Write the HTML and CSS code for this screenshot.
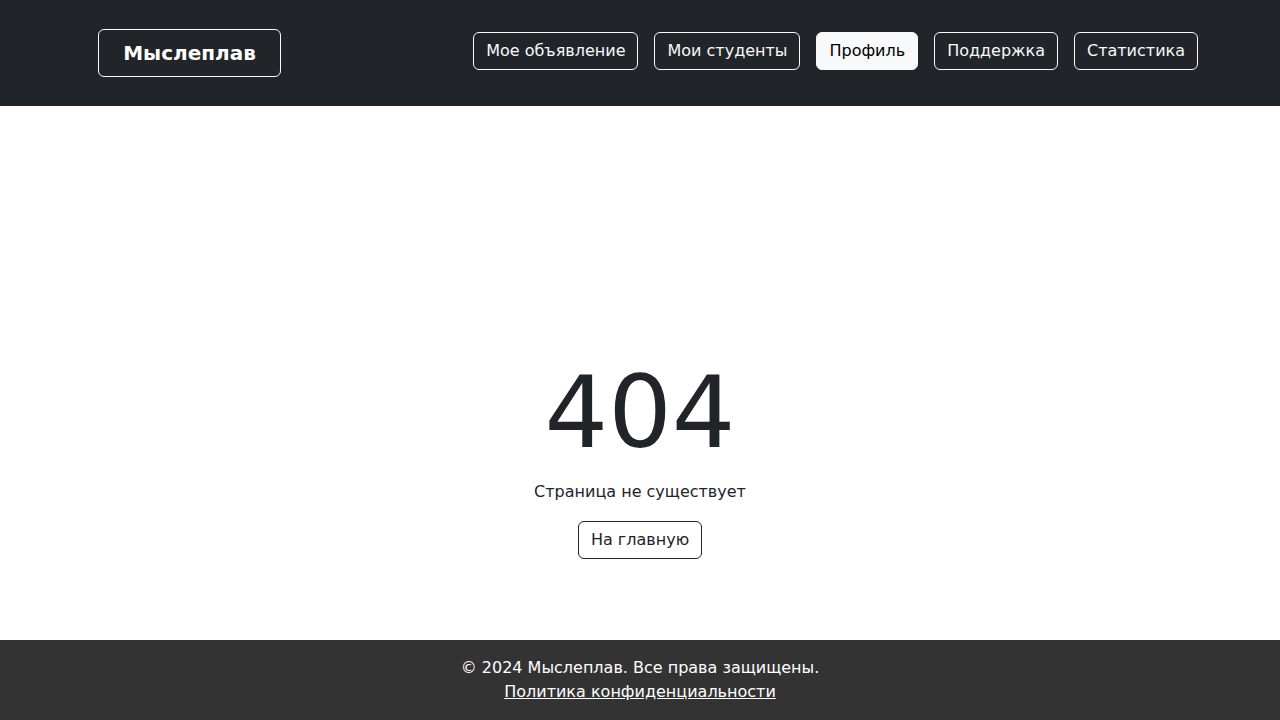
FILE: index.html
```html
<!DOCTYPE html>
<html lang="ru">
<head>
<meta charset="utf-8">
<title>404 — Мыслеплав</title>
<link rel="stylesheet" href="styles.css">
</head>
<body>
<header class="site-header">
  <div class="header-inner">
    <a class="brand" href="#">Мыслеплав</a>
    <nav class="nav">
      <a class="nav-btn" href="#">Мое объявление</a>
      <a class="nav-btn" href="#">Мои студенты</a>
      <a class="nav-btn active" href="#">Профиль</a>
      <a class="nav-btn" href="#">Поддержка</a>
      <a class="nav-btn" href="#">Статистика</a>
    </nav>
  </div>
</header>
<main class="main">
  <div class="error-box">
    <h1 class="error-code">404</h1>
    <p class="error-text">Страница не существует</p>
    <a class="home-btn" href="#">На главную</a>
  </div>
</main>
<footer class="site-footer">
  <p class="footer-line">© 2024 Мыслеплав. Все права защищены.</p>
  <a class="footer-link" href="#">Политика конфиденциальности</a>
</footer>
</body>
</html>
```
FILE: styles.css
```css
* { box-sizing: border-box; }
html, body { margin: 0; padding: 0; }
body {
  font-family: "DejaVu Sans", sans-serif;
  font-size: 16px;
  line-height: 1.5;
  color: #212529;
  background: #fff;
  min-height: 100vh;
  display: flex;
  flex-direction: column;
}
a { text-decoration: none; }

.site-header {
  background: #212529;
  height: 106px;
}
.header-inner {
  padding: 29px 82px 0 98px;
  display: flex;
  justify-content: space-between;
  align-items: flex-start;
}
.brand {
  display: block;
  height: 48px;
  width: 183px;
  border: 1px solid #f8f9fa;
  border-radius: 6px;
  color: #fff;
  font-weight: bold;
  font-size: 20px;
  line-height: 46px;
  text-align: center;
}
.nav {
  display: flex;
  gap: 16px;
  margin-top: 3px;
}
.nav-btn {
  display: block;
  height: 38px;
  padding: 0 12px;
  border: 1px solid #f8f9fa;
  border-radius: 6px;
  color: #f8f9fa;
  line-height: 36px;
  font-size: 16px;
}
.nav-btn.active {
  background: #f8f9fa;
  color: #000;
}

.main {
  flex: 1;
  display: flex;
  justify-content: center;
  padding-top: 247px;
}
.error-box {
  display: flex;
  flex-direction: column;
  align-items: center;
}
.error-code {
  margin: 0 0 7px;
  font-size: 100px;
  font-weight: normal;
  line-height: 120px;
}
.error-text {
  margin: 0 0 17px;
}
.home-btn {
  display: block;
  height: 38px;
  padding: 0 12px;
  border: 1px solid #212529;
  border-radius: 6px;
  color: #212529;
  line-height: 36px;
}

.site-footer {
  background: #333;
  color: #fff;
  text-align: center;
  padding: 16px 0;
  height: 80px;
}
.footer-line { margin: 0; }
.footer-link {
  color: #fff;
  text-decoration: underline;
}
```
